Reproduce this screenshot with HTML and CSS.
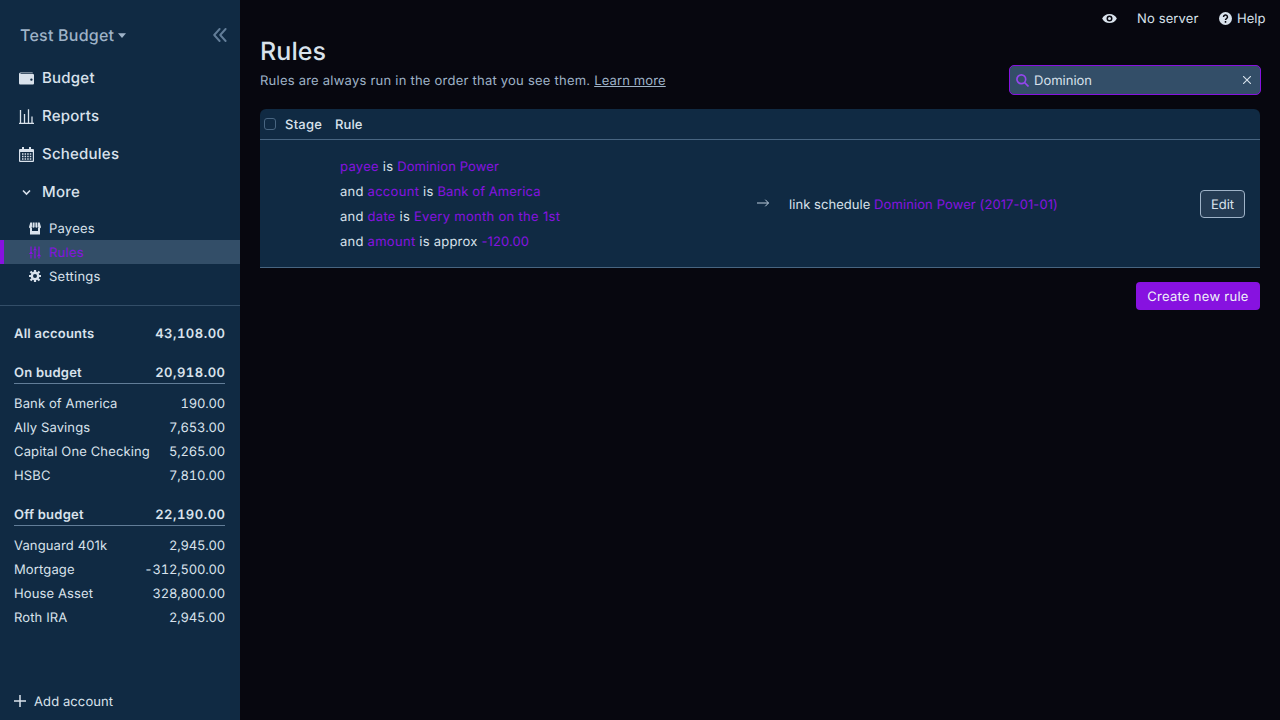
FILE: index.html
```html
<!DOCTYPE html>
<html lang="en">
<head>
<meta charset="utf-8">
<title>Rules</title>
<link rel="stylesheet" href="styles.css">
</head>
<body>
<div class="app">
  <aside class="sidebar">
    <div class="budget-head">
      <span class="budget-name">Test Budget</span>
      <svg class="caret" width="8" height="5" viewBox="0 0 8 5"><path d="M0 .3h8L4 5z" fill="currentColor"/></svg>
      <svg class="collapse" width="14" height="14" viewBox="0 0 14 14" fill="none" stroke="currentColor" stroke-width="1.9" stroke-linecap="round" stroke-linejoin="round"><path d="M6.600 1 1.200 7l5.400 6M12.600 1 7.200 7l5.400 6"/></svg>
    </div>
    <nav class="nav">
      <a class="nav-item"><svg width="15" height="15" viewBox="0 0 15 15" fill="currentColor"><path fill-rule="evenodd" d="M0 3a1.500 1.500 0 0 1 1.500-1.500h11.700a.8.8 0 0 1 .8.8H1.500V3H14a1 1 0 0 1 1 1v8.500a1 1 0 0 1-1 1H1.300A1.300 1.300 0 0 1 0 12.200zm12.400 6.800a1.200 1.200 0 1 0 0-2.400 1.200 1.200 0 0 0 0 2.400z"/></svg><span>Budget</span></a>
      <a class="nav-item"><svg width="15" height="15" viewBox="0 0 15 15" fill="none" stroke="currentColor" stroke-width="1.300"><path d="M0 14.300h15M1.500 14V1M5.500 14V5M9.500 14V.3M13 14V7.500"/></svg><span>Reports</span></a>
      <a class="nav-item"><svg width="15" height="15" viewBox="0 0 15 15" fill="currentColor"><path fill-rule="evenodd" d="M3 0h2v2h5V0h2v2h2a1 1 0 0 1 1 1v11a1 1 0 0 1-1 1H1a1 1 0 0 1-1-1V3a1 1 0 0 1 1-1h2zM1.200 5v8.800h12.600V5z"/><path d="M3 6.200h1.500v1.500H3zM5.600 6.200h1.500v1.500H5.600zM8.200 6.200h1.500v1.500H8.200zM10.800 6.200h1.500v1.500h-1.500zM3 8.700h1.500v1.500H3zM5.600 8.700h1.500v1.500H5.600zM8.200 8.700h1.500v1.500H8.200zM10.800 8.700h1.500v1.500h-1.500zM3 11.200h1.500v1.500H3zM5.600 11.200h1.500v1.500H5.600zM8.200 11.200h1.500v1.500H8.200zM10.800 11.200h1.500v1.500h-1.500z"/></svg><span>Schedules</span></a>
      <a class="nav-item"><svg width="15" height="15" viewBox="0 0 15 15" fill="none" stroke="currentColor" stroke-width="1.600"><path d="m4 5.500 3.500 3.500L11 5.500"/></svg><span>More</span></a>
    </nav>
    <nav class="subnav">
      <a class="sub-item"><svg width="12" height="13" viewBox="0 0 12 13" fill="currentColor"><path d="M1.300.5h2L2.900 5a1.450 1.450 0 0 1-2.900 0zM4 .5h1.600V5a1.200 1.200 0 0 1-2.200 0zM6.400.5H8L8.600 5a1.200 1.200 0 0 1-2.200 0zM8.700.5h2L12 5a1.450 1.450 0 0 1-2.900 0z"/><path d="M1 6h2v3h6V6h2v6.500H1z"/></svg><span>Payees</span></a>
      <a class="sub-item active"><svg width="12" height="13" viewBox="0 0 12 13" fill="none" stroke="currentColor" stroke-width="1.200"><path d="M2 .5v5.500M2 8.500v4M6 .5v2M6 5v7.500M10 .5v8M10 11v1.500"/><path d="M.3 7.500h3.400M4.300 4h3.400M8.300 9.800h3.400M1 6.500h2M5 3h2M9 8.800h2"/></svg><span>Rules</span></a>
      <a class="sub-item"><svg width="12" height="12" viewBox="0 0 12 12"><circle cx="6" cy="6" r="3.200" fill="none" stroke="currentColor" stroke-width="2.400"/><path d="M6 0v2.200M6 9.800V12M0 6h2.200M9.800 6H12M1.500 1.500l1.800 1.800M8.700 8.700l1.800 1.800M1.500 10.500l1.800-1.800M8.700 3.300l1.800-1.800" stroke="currentColor" stroke-width="2.200"/></svg><span>Settings</span></a>
    </nav>
    <div class="accounts">
      <div class="acct total"><span>All accounts</span><span class="amount">43,108.00</span></div>
      <div class="acct group"><span>On budget</span><span class="amount">20,918.00</span></div>
      <div class="acct"><span>Bank of America</span><span class="amount">190.00</span></div>
      <div class="acct"><span>Ally Savings</span><span class="amount">7,653.00</span></div>
      <div class="acct"><span>Capital One Checking</span><span class="amount">5,265.00</span></div>
      <div class="acct"><span>HSBC</span><span class="amount">7,810.00</span></div>
      <div class="acct group"><span>Off budget</span><span class="amount">22,190.00</span></div>
      <div class="acct"><span>Vanguard 401k</span><span class="amount">2,945.00</span></div>
      <div class="acct"><span>Mortgage</span><span class="amount">-312,500.00</span></div>
      <div class="acct"><span>House Asset</span><span class="amount">328,800.00</span></div>
      <div class="acct"><span>Roth IRA</span><span class="amount">2,945.00</span></div>
    </div>
    <div class="add"><svg width="12" height="12" viewBox="0 0 12 12" stroke="currentColor" stroke-width="1.500"><path d="M6 0v12M0 6h12"/></svg><span>Add account</span></div>
  </aside>
  <main class="main">
    <div class="titlebar">
      <svg class="eye" width="15" height="15" viewBox="0 0 20 20" fill="currentColor"><path fill-rule="evenodd" d="M.2 10a11 11 0 0 1 19.600 0A11 11 0 0 1 .2 10zm9.800 4a4 4 0 1 0 0-8 4 4 0 0 0 0 8zm0-2a2 2 0 1 1 0-4 2 2 0 0 1 0 4z"/></svg>
      <span class="server">No server</span>
      <svg class="help-icon" width="13" height="13" viewBox="0 0 13 13"><circle cx="6.500" cy="6.500" r="6.500" fill="currentColor"/><path class="question" d="M4.500 5a2 1.900 0 1 1 3 1.600c-.7.400-1 .6-1 1.500M6.500 9.100v1.600"/></svg>
      <span class="help">Help</span>
    </div>
    <h1 class="title">Rules</h1>
    <div class="intro">
      <p class="desc">Rules are always run in the order that you see them. <a class="learn">Learn more</a></p>
      <div class="search">
        <svg width="13" height="13" viewBox="0 0 13 13" fill="none" stroke="currentColor" stroke-width="1.700"><circle cx="5.300" cy="5.300" r="4.400"/><path d="m8.500 8.500 4 4"/></svg>
        <span class="query">Dominion</span>
        <svg class="clear" width="8" height="8" viewBox="0 0 8 8" stroke="currentColor" stroke-width="1.100"><path d="m0 0 8 8M8 0 0 8"/></svg>
      </div>
    </div>
    <section class="table">
      <div class="thead"><span class="check"></span><span class="stage">Stage</span><span class="label">Rule</span></div>
      <div class="row">
        <div class="conditions">
          <div><b>payee</b> is <b class="name">Dominion Power</b></div>
          <div>and <b>account</b> is <b class="name">Bank of America</b></div>
          <div>and <b>date</b> is <b>Every month on the 1st</b></div>
          <div>and <b>amount</b> is approx <b class="name">-120.00</b></div>
        </div>
        <svg class="arrow" width="12" height="8" viewBox="0 0 12 8" fill="none" stroke="currentColor"><path d="M0 4h11.500M8.300.7 11.500 4 8.300 7.300"/></svg>
        <div class="action">link schedule <b class="name">Dominion Power (2017-01-01)</b></div>
        <button class="edit">Edit</button>
      </div>
    </section>
    <div class="footer"><button class="create">Create new rule</button></div>
  </main>
</div>
</body>
</html>
```

FILE: styles.css
```css
* { box-sizing: border-box; }
body { margin: 0; background: #07070f; color: #d9e2ec; font: 13px/16px Inter, sans-serif; letter-spacing: 0.23px; text-rendering: geometricPrecision; }
svg { display: block; flex: none; }
.app { display: flex; height: 720px; overflow: hidden; }
.sidebar { width: 240px; flex: none; background: #102a43; display: flex; flex-direction: column; }
.budget-head { display: flex; align-items: center; height: 30px; margin-top: 20px; padding: 0 13px 0 20px; color: #9fb3c8; }
.budget-name { font-size: 16px; font-weight: 500; line-height: 20px; }
.caret { margin-left: 4px; }
.collapse { margin-left: auto; color: #627d98; }
.nav { margin-top: 9px; }
.nav-item { display: flex; align-items: center; gap: 8px; height: 38px; padding-left: 19px; font-size: 15px; font-weight: 500; }
.subnav { margin-top: 5px; padding-bottom: 17px; border-bottom: 1px solid #334e68; }
.sub-item { display: flex; align-items: center; gap: 8px; height: 24px; padding-left: 29px; }
.sub-item.active { background: #334e68; color: #8712e0; border-left: 4px solid #8712e0; padding-left: 25px; }
.sub-item span, .add span, .server, .help, .query, .stage, .label { padding-top: 2px; }
.accounts { padding: 15px 15px 0 14px; }
.acct { display: flex; justify-content: space-between; height: 24px; line-height: 24px; letter-spacing: 0.13px; }
.acct span { padding-top: 1px; }
.acct .amount { font-feature-settings: "tnum"; letter-spacing: -0.2px; }
.total, .group { font-weight: 600; letter-spacing: 0.23px; }
.total .amount, .group .amount { letter-spacing: 0.5px; margin-right: -0.5px; }
.group { margin: 15px 0 7px; border-bottom: 1px solid #627d98; }
.add { display: flex; align-items: center; gap: 8px; margin-top: auto; height: 16px; margin-bottom: 11px; padding-left: 14px; letter-spacing: 0.1px; }
.main { flex: 1; padding: 0 20px; }
.titlebar { display: flex; align-items: center; height: 36px; margin-right: -5px; justify-content: flex-end; }
.server { width: 61px; white-space: nowrap; margin: 0 21px 0 20px; letter-spacing: 0.13px; }
.help { width: 28px; letter-spacing: 0; }
.help-icon { margin-right: 5px; }
.question { fill: none; stroke: #07070f; stroke-width: 1.5; }
.title { margin: 0; padding-top: 1px; font-size: 25px; line-height: 30px; font-weight: 500; letter-spacing: 0.1px; }
.intro { display: flex; justify-content: space-between; height: 42px; }
.desc { margin: 6px 0 0; color: #9fb3c8; }
.learn { text-decoration: underline; letter-spacing: 0.13px; }
.search { display: flex; align-items: center; width: 252px; height: 30px; margin: -2px -1px 0 0; padding: 0 9px 0 6px; background: #334e68; border: 1px solid #8712e0; border-radius: 5px; }
.search svg { color: #9446ed; }
.query { margin-left: 5px; letter-spacing: 0; }
.search .clear { margin-left: auto; color: #d9e2ec; }
.table { background: #102a43; border-radius: 6px 6px 0 0; border-bottom: 1px solid #486581; }
.thead { display: flex; align-items: center; height: 31px; padding-left: 4px; border-bottom: 1px solid #486581; font-weight: 500; }
.check { width: 12px; height: 12px; margin-right: 9px; border: 1px solid #486581; border-radius: 3px; }
.stage { width: 50px; }
.label { letter-spacing: 0.1px; }
.row { display: flex; align-items: center; height: 127px; padding: 0 15px 0 80px; }
.row b { font-weight: 400; color: #8712e0; letter-spacing: 0.3px; }
.row .name { letter-spacing: 0.1px; }
.conditions { width: 417px; line-height: 25px; padding-top: 3px; }
.arrow { margin-top: -2px; color: #bcccdc; }
.action { margin-left: 20px; flex: 1; padding-top: 3px; letter-spacing: 0.05px; }
button { font: inherit; letter-spacing: 0.28px; text-rendering: inherit; height: 28px; padding: 2px 0 0; border-radius: 4px; }
.edit { width: 45px; background: #243b53; color: #d9e2ec; border: 1px solid #9fb3c8; letter-spacing: 0; }
.footer { display: flex; justify-content: flex-end; padding-top: 14px; }
.create { width: 124px; background: #8712e0; color: #f0f4f8; border: 0; }
```
